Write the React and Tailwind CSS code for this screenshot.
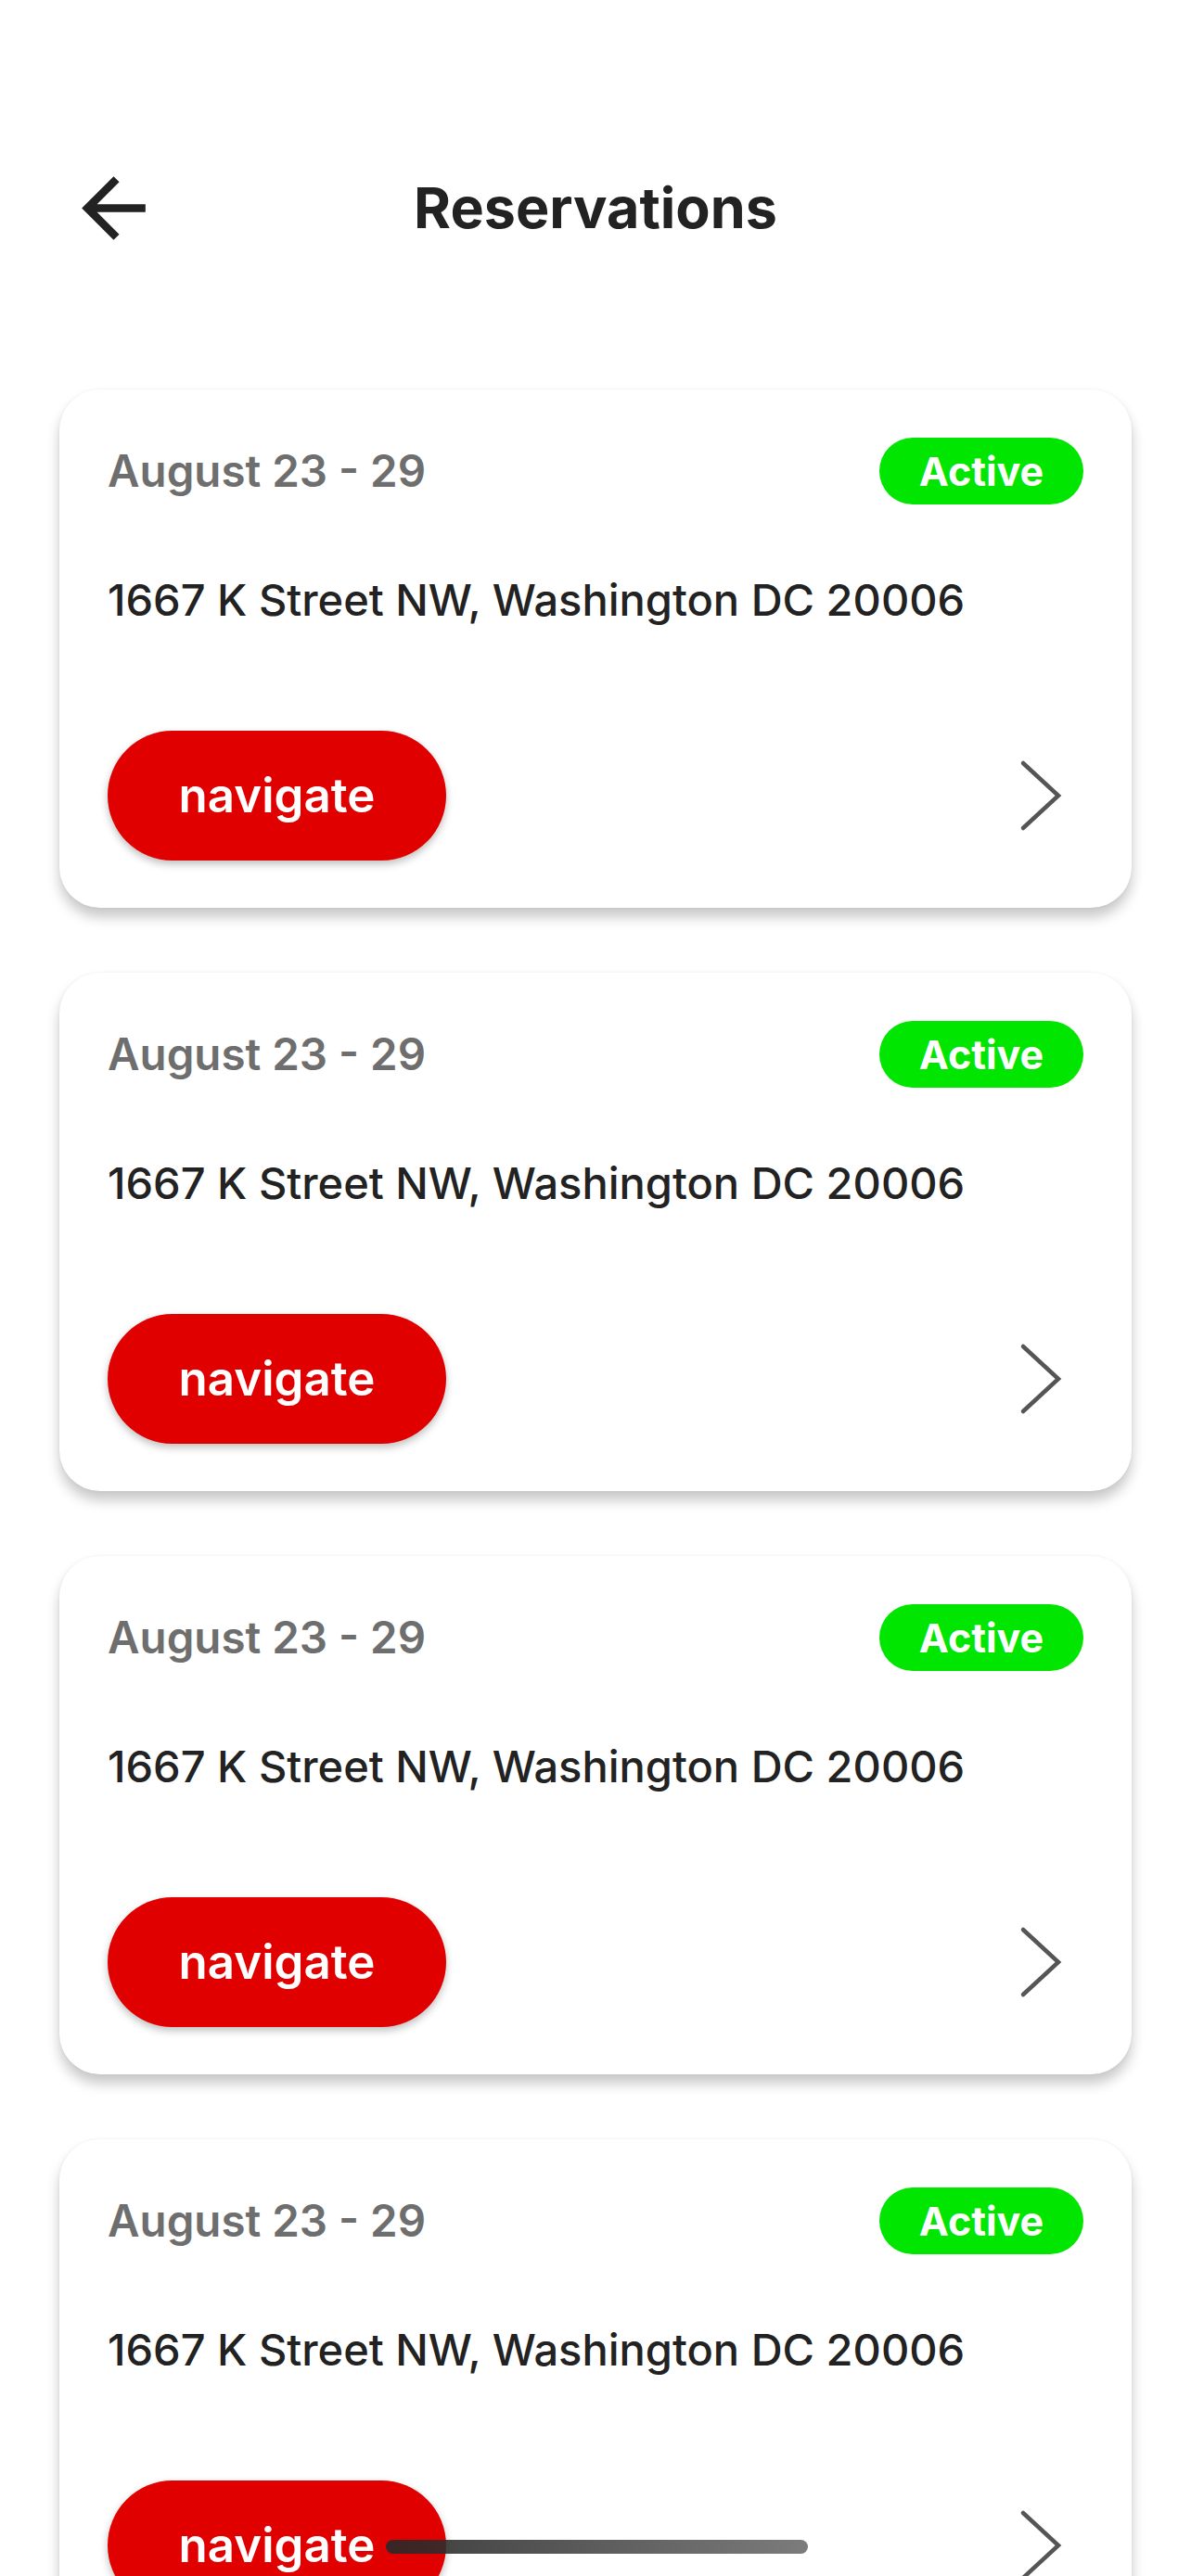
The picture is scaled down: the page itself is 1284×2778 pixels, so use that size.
import React from "react";

function BackArrow() {
  return (
    <svg width="103" height="103" viewBox="0 0 24 24" fill="#222222">
      <path d="M20 11H7.83l5.59-5.59L12 4l-8 8 8 8 1.41-1.41L7.83 13H20v-2z" />
    </svg>
  );
}

function Chevron() {
  return (
    <svg width="52" height="84" viewBox="0 0 52 84" fill="none">
      <polyline points="8,7 46,42 8,77" stroke="#555555" strokeWidth="4.5" strokeLinecap="round" strokeLinejoin="miter" />
    </svg>
  );
}

function Card() {
  return (
    <div className="bg-white rounded-[44px] px-[52px] pt-[52px] pb-[51px] shadow-[0_10px_14px_rgba(0,0,0,0.22),0_0_3px_rgba(0,0,0,0.06)]">
      <div className="flex items-center justify-between h-[72px]">
        <span className="text-[47.5px] leading-[58px] font-semibold text-[#6e6e6e]">August 23 - 29</span>
        <span className="h-[72px] w-[220px] rounded-full bg-[#00e600] text-white text-[43px] font-bold flex items-center justify-center">Active</span>
      </div>
      <div className="mt-[74px] text-[47px] leading-[57px] font-medium text-[#222222] whitespace-nowrap">
        1667 K Street NW, Washington DC 20006
      </div>
      <div className="mt-[113px] flex items-center justify-between">
        <button className="h-[140px] w-[365px] rounded-full bg-[#e00000] text-white text-[51px] font-semibold shadow-[0_4px_8px_rgba(0,0,0,0.25)] flex items-center justify-center">
          navigate
        </button>
        <div className="mr-[21px]">
          <Chevron />
        </div>
      </div>
    </div>
  );
}

export default function App() {
  return (
    <div className="relative w-[1284px] h-[2778px] overflow-hidden bg-white" style={{ fontFamily: "Inter, 'Noto Sans', sans-serif" }}>
      <div className="pt-[172px] grid grid-cols-[1fr_auto_1fr] items-center px-[71px]">
        <div className="flex items-center">
          <BackArrow />
        </div>
        <h1 className="text-[61px] leading-[104px] font-bold text-[#222222]">Reservations</h1>
        <div />
      </div>
      <div className="mt-[144px] px-[64px] flex flex-col gap-[70px]">
        <Card />
        <Card />
        <Card />
        <Card />
      </div>
      <div className="absolute left-[416px] top-[2739px] w-[455px] h-[15px] rounded-full bg-gradient-to-r from-[rgba(40,40,40,0.9)] to-[rgba(80,80,80,0.75)]" />
    </div>
  );
}
